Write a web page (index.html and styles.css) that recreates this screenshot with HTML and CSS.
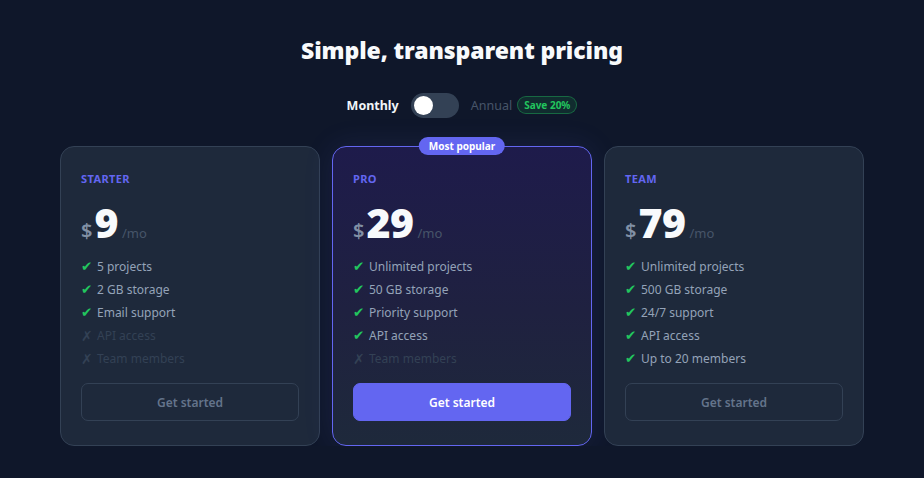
FILE: index.html
```html
<!DOCTYPE html>
<html lang="en">
<head>
<meta charset="utf-8">
<title>Pricing</title>
<link rel="stylesheet" href="styles.css">
</head>
<body>
<main class="pricing">
  <h1 class="title">Simple, transparent pricing</h1>

  <div class="billing">
    <span class="billing-opt active">Monthly</span>
    <button class="switch" aria-label="Toggle annual billing"><span class="knob"></span></button>
    <span class="billing-opt">Annual</span>
    <span class="save">Save 20%</span>
  </div>

  <div class="plans">
    <section class="plan">
      <h2 class="plan-name">Starter</h2>
      <div class="price"><span class="cur">$</span><span class="amt">9</span><span class="per">/mo</span></div>
      <ul class="features">
        <li><span class="ic yes">✔</span>5 projects</li>
        <li><span class="ic yes">✔</span>2 GB storage</li>
        <li><span class="ic yes">✔</span>Email support</li>
        <li class="off"><span class="ic no">✗</span>API access</li>
        <li class="off"><span class="ic no">✗</span>Team members</li>
      </ul>
      <button class="cta">Get started</button>
    </section>

    <section class="plan featured">
      <span class="ribbon">Most popular</span>
      <h2 class="plan-name">Pro</h2>
      <div class="price"><span class="cur">$</span><span class="amt">29</span><span class="per">/mo</span></div>
      <ul class="features">
        <li><span class="ic yes">✔</span>Unlimited projects</li>
        <li><span class="ic yes">✔</span>50 GB storage</li>
        <li><span class="ic yes">✔</span>Priority support</li>
        <li><span class="ic yes">✔</span>API access</li>
        <li class="off"><span class="ic no">✗</span>Team members</li>
      </ul>
      <button class="cta primary">Get started</button>
    </section>

    <section class="plan">
      <h2 class="plan-name">Team</h2>
      <div class="price"><span class="cur">$</span><span class="amt">79</span><span class="per">/mo</span></div>
      <ul class="features">
        <li><span class="ic yes">✔</span>Unlimited projects</li>
        <li><span class="ic yes">✔</span>500 GB storage</li>
        <li><span class="ic yes">✔</span>24/7 support</li>
        <li><span class="ic yes">✔</span>API access</li>
        <li><span class="ic yes">✔</span>Up to 20 members</li>
      </ul>
      <button class="cta">Get started</button>
    </section>
  </div>
</main>
</body>
</html>
```

FILE: styles.css
```css
* { box-sizing: border-box; }

html, body {
  margin: 0;
  background: #0f172a;
  color: #f1f5f9;
  font-family: "Noto Sans", "Open Sans", "DejaVu Sans", sans-serif;
}

.pricing {
  display: flex;
  flex-direction: column;
  align-items: center;
  padding-top: 34px;
}

.title {
  margin: 0;
  font-size: 23px;
  line-height: 32px;
  font-weight: 900;
  letter-spacing: -0.1px;
  color: #f8fafc;
}

/* billing period switch */
.billing {
  display: flex;
  align-items: center;
  margin-top: 26px;
  height: 26px;
}

.billing-opt {
  font-size: 12.5px;
  font-weight: 400;
  color: #475569;
}

.billing-opt.active {
  font-weight: 700;
  color: #f1f5f9;
}

.switch {
  width: 48px;
  height: 25px;
  margin: 0 12px;
  padding: 0 3px;
  border: 0;
  border-radius: 13px;
  background: #334155;
  display: flex;
  align-items: center;
}

.knob {
  width: 19px;
  height: 19px;
  border-radius: 50%;
  background: #ffffff;
}

.save {
  margin-left: 5px;
  padding: 1px 6px;
  font-size: 10px;
  line-height: 14px;
  font-weight: 700;
  color: #22c55e;
  background: rgba(34, 197, 94, 0.12);
  border: 1px solid rgba(34, 197, 94, 0.4);
  border-radius: 9px;
}

/* plan cards */
.plans {
  display: grid;
  grid-template-columns: repeat(3, 260px);
  gap: 12px;
  margin-top: 28px;
}

.plan {
  position: relative;
  display: flex;
  flex-direction: column;
  height: 300px;
  padding: 24px 20px 24px;
  background: #1e293b;
  border: 1px solid #334155;
  border-radius: 14px;
}

.plan.featured {
  background: linear-gradient(180deg, #1e1b4b 0%, #1f2140 55%, #1e293b 100%);
  border-color: #6366f1;
  box-shadow: 0 0 30px rgba(99, 102, 241, 0.12);
}

.ribbon {
  position: absolute;
  top: -10px;
  left: 50%;
  transform: translateX(-50%);
  padding: 2px 10px;
  font-size: 10px;
  line-height: 14px;
  font-weight: 700;
  color: #ffffff;
  background: #6366f1;
  border-radius: 10px;
  white-space: nowrap;
}

.plan-name {
  margin: 0;
  font-size: 11px;
  line-height: 16px;
  font-weight: 700;
  letter-spacing: 0.4px;
  text-transform: uppercase;
  color: #6366f1;
}

.price {
  display: flex;
  align-items: baseline;
  margin-top: 13px;
  height: 44px;
}

.cur {
  font-size: 20px;
  font-weight: 600;
  color: #8190a5;
  margin-right: 2px;
}

.amt {
  font-size: 41px;
  line-height: 44px;
  font-weight: 900;
  letter-spacing: -0.5px;
  color: #f8fafc;
}

.per {
  margin-left: 4px;
  font-size: 13px;
  color: #475569;
}

.features {
  list-style: none;
  margin: 11px 0 0;
  padding: 0;
}

.features li {
  display: flex;
  align-items: center;
  font-size: 12px;
  line-height: 23px;
  color: #94a3b8;
}

.features li.off { color: #334155; }

.ic {
  width: 16px;
  font-family: "DejaVu Sans", sans-serif;
  font-size: 13.5px;
  line-height: 1;
}

.ic.yes { color: #22c55e; }
.ic.no { color: #334155; font-size: 14px; }

.cta {
  margin-top: auto;
  height: 38px;
  border-radius: 7px;
  border: 1px solid #334155;
  background: transparent;
  font-family: inherit;
  font-size: 12px;
  font-weight: 600;
  color: #64748b;
}

.cta.primary {
  border-color: #6366f1;
  background: #6366f1;
  color: #ffffff;
}
```
